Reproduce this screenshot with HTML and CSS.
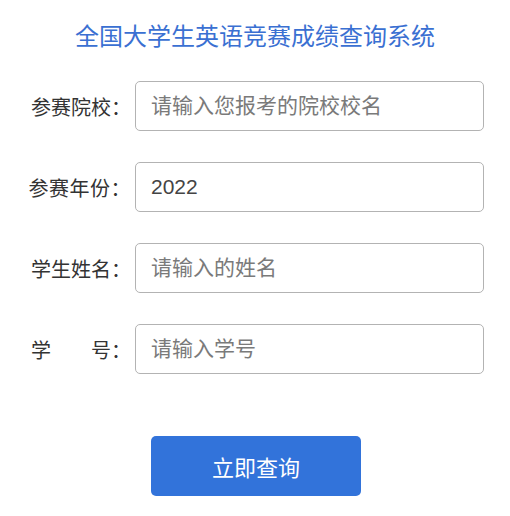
FILE: index.html
```html
<!DOCTYPE html>
<html lang="zh-CN">
<head>
<meta charset="utf-8">
<title>全国大学生英语竞赛成绩查询系统</title>
<link rel="stylesheet" href="styles.css">
</head>
<body>
<div class="page">
  <h1 class="title">全国大学生英语竞赛成绩查询系统</h1>
  <form class="form">
    <div class="row">
      <label class="label">参赛院校：</label>
      <input class="input" type="text" placeholder="请输入您报考的院校校名">
    </div>
    <div class="row">
      <label class="label label-wide">参赛年份：</label>
      <input class="input" type="text" value="2022">
    </div>
    <div class="row">
      <label class="label">学生姓名：</label>
      <input class="input" type="text" placeholder="请输入的姓名">
    </div>
    <div class="row">
      <label class="label">学　　号：</label>
      <input class="input" type="text" placeholder="请输入学号">
    </div>
    <div class="actions">
      <button class="btn" type="button">立即查询</button>
    </div>
  </form>
</div>
</body>
</html>
```
FILE: styles.css
```css
html, body {
  margin: 0;
  padding: 0;
  background: #fff;
}
body {
  font-family: "Noto Sans CJK SC", "Noto Sans", sans-serif;
  color: #333;
}
.page {
  width: 510px;
  padding-top: 20px;
}
.title {
  margin: 0;
  text-align: center;
  font-size: 24px;
  line-height: 30px;
  font-weight: normal;
  color: #3a70d2;
}
.form {
  margin-top: 31px;
  display: flex;
  flex-direction: column;
  gap: 31px;
}
.row {
  display: flex;
  align-items: center;
  gap: 4px;
  height: 50px;
}
.label {
  width: 131px;
  text-align: right;
  font-size: 20px;
  color: #333;
  white-space: nowrap;
}
.label-wide {
  letter-spacing: 0.5px;
}
.input {
  box-sizing: border-box;
  width: 349px;
  height: 50px;
  border: 1px solid #b3b3b3;
  border-radius: 5px;
  padding: 0 15px;
  font-family: "Liberation Sans", "Noto Sans CJK SC", sans-serif;
  font-size: 21px;
  color: #444;
  outline: none;
}
.input::placeholder {
  font-family: "Noto Sans CJK SC", sans-serif;
  color: #7a7a7a;
}
.actions {
  display: flex;
  justify-content: center;
  margin-top: 31px;
}
.btn {
  width: 210px;
  height: 60px;
  border: none;
  border-radius: 5px;
  background: #3273da;
  color: #fff;
  font-family: "Noto Sans CJK SC", sans-serif;
  font-size: 22px;
  margin-left: 2px;
}
```
